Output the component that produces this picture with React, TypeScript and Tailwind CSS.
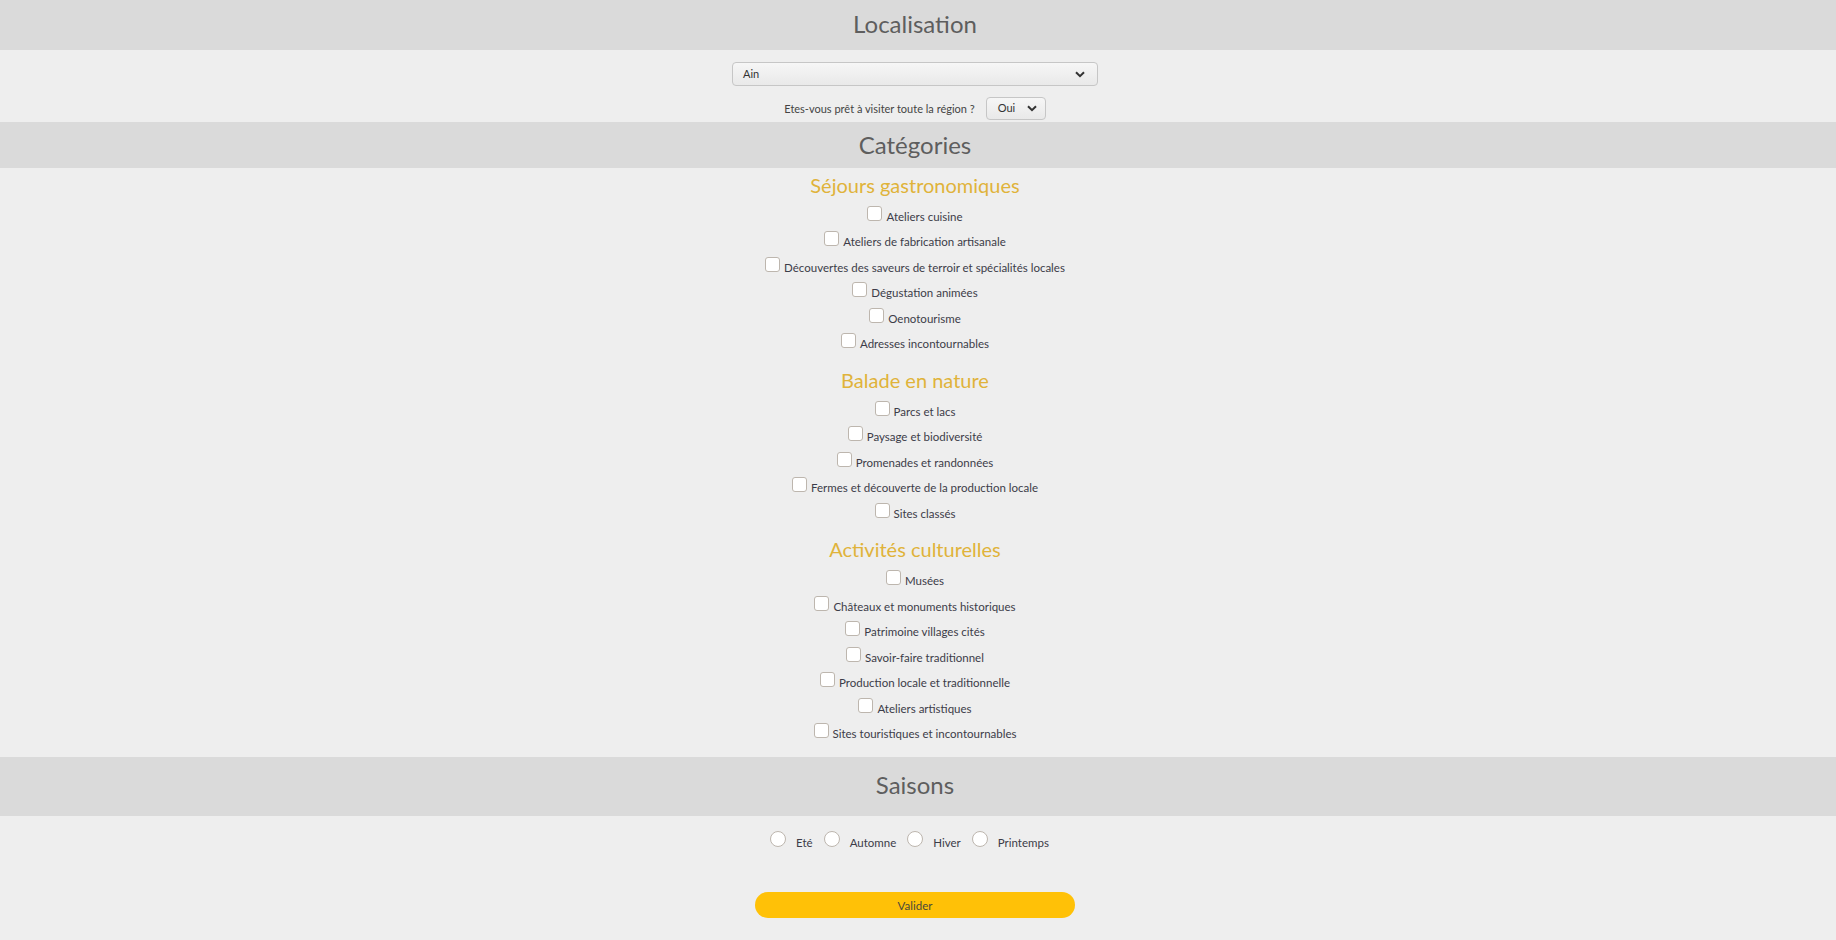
const sections = [
  {
    title: "Séjours gastronomiques",
    items: [
      "Ateliers cuisine",
      "Ateliers de fabrication artisanale",
      "Découvertes des saveurs de terroir et spécialités locales",
      "Dégustation animées",
      "Oenotourisme",
      "Adresses incontournables",
    ],
  },
  {
    title: "Balade en nature",
    items: [
      "Parcs et lacs",
      "Paysage et biodiversité",
      "Promenades et randonnées",
      "Fermes et découverte de la production locale",
      "Sites classés",
    ],
  },
  {
    title: "Activités culturelles",
    items: [
      "Musées",
      "Châteaux et monuments historiques",
      "Patrimoine villages cités",
      "Savoir-faire traditionnel",
      "Production locale et traditionnelle",
      "Ateliers artistiques",
      "Sites touristiques et incontournables",
    ],
  },
];

const seasons = ["Eté", "Automne", "Hiver", "Printemps"];

function Chevron() {
  return (
    <svg width="10" height="7" viewBox="0 0 10 7" className="shrink-0">
      <polyline points="1,1.2 5,5.2 9,1.2" fill="none" stroke="#333" strokeWidth="2" />
    </svg>
  );
}

function SectionHeader({ label, className }: { label: string; className: string }) {
  return (
    <div className={`flex w-full items-center justify-center bg-[#dadada] pr-[6px] text-[24px] text-[#5e5e5e] ${className}`}>
      {label}
    </div>
  );
}

export default function App() {
  return (
    <div className="min-h-[940px] w-full bg-[#eeeeee] font-['Lato',sans-serif]">
      <SectionHeader label="Localisation" className="h-[50px] pb-[3px]" />

      <div className="flex flex-col items-center pr-[6px]">
        <div className="mt-[12px] flex h-[24px] w-[366px] items-center justify-between rounded-[4px] border border-[#c6c6c6] bg-gradient-to-b from-[#f6f6f6] to-[#e9e9e9] pl-[10px] pr-[12px] text-[11px] text-[#333]">
          <span>Ain</span>
          <Chevron />
        </div>
        <div className="mt-[11px] mb-[2px] flex items-center gap-[11px] text-[11px] text-[#444]">
          <span className="pt-[1px]">Etes-vous prêt à visiter toute la région ?</span>
          <div className="flex h-[23px] w-[60px] items-center gap-[12px] rounded-[4px] border border-[#c6c6c6] bg-gradient-to-b from-[#f6f6f6] to-[#e9e9e9] pl-[11px] text-[#333]">
            <span>Oui</span>
            <Chevron />
          </div>
        </div>
      </div>

      <SectionHeader label="Catégories" className="h-[46px] pb-[1px]" />

      <div className="flex flex-col items-center pb-[10px] pr-[6px]">
        {sections.map((s) => (
          <div key={s.title} className="mb-[6px] flex flex-col items-center last:mb-0">
            <div className="flex h-[36px] items-center pb-[3px] text-[20px] text-[#e0b33a]">{s.title}</div>
            {s.items.map((item) => (
              <div key={item} className="flex h-[25.5px] items-center pb-[3px]">
                <div className="flex items-baseline text-[11.5px] text-[#3c3c48]">
                  <span className="mr-[4px] inline-block h-[15px] w-[15px] rounded-[3px] border border-[#bdb6ae] bg-white" />
                  <span>{item}</span>
                </div>
              </div>
            ))}
          </div>
        ))}
      </div>

      <SectionHeader label="Saisons" className="h-[59px] pb-[4px]" />

      <div className="flex flex-col items-center pr-[6px]">
        <div className="mt-[15px] flex items-baseline text-[11.5px] text-[#3c3c48]">
          {seasons.map((s) => (
            <div key={s} className="mr-[11px] flex items-baseline">
              <span className="mr-[10px] inline-block h-[16px] w-[16px] rounded-full border border-[#bdb6ae] bg-white" />
              <span>{s}</span>
            </div>
          ))}
        </div>
        <button className="mt-[41px] flex h-[26px] w-[320px] items-center justify-center rounded-full bg-[#ffc107] text-[11.5px] text-[#4a4a3c]">
          Valider
        </button>
      </div>
    </div>
  );
}
